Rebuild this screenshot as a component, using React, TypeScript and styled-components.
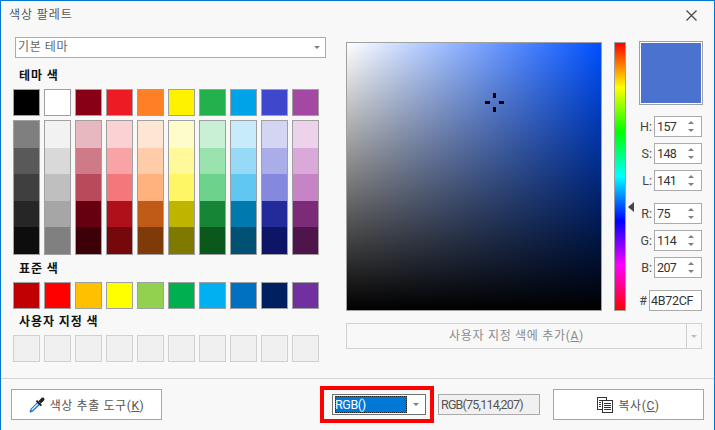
import styled, { createGlobalStyle } from 'styled-components';

const THEME_COLORS = ['#000000', '#ffffff', '#880015', '#ed1c24', '#ff7f27', '#fff200', '#22b14c', '#00a2e8', '#3f48cc', '#a349a4'];

const SHADES = [
    ['#7f7f7f', '#595959', '#3f3f3f', '#262626', '#0d0d0d'],
    ['#f2f2f2', '#d9d9d9', '#bfbfbf', '#a6a6a6', '#808080'],
    ['#e7b8c0', '#cf7a87', '#b84a5b', '#660010', '#3d0008'],
    ['#fbd1d3', '#f8a4a7', '#f4777c', '#b0101a', '#76080c'],
    ['#ffe5d4', '#ffcca9', '#ffb27d', '#bf5b17', '#7f3a0a'],
    ['#fffccc', '#fff999', '#fff666', '#bfb500', '#807900'],
    ['#c9f0d5', '#9be3ae', '#6dd38c', '#178536', '#0a581c'],
    ['#c8ebfb', '#96daf7', '#60c7f2', '#0079ae', '#005174'],
    ['#d3d5f2', '#aaade8', '#8488df', '#232a99', '#0f1566'],
    ['#edd2ec', '#daa9d9', '#c683c6', '#7b2b78', '#50144c'],
];

const STANDARD_COLORS = ['#c00000', '#ff0000', '#ffc000', '#ffff00', '#92d050', '#00b050', '#00b0f0', '#0070c0', '#002060', '#7030a0'];

const HSL_VALUES = [
    { label: 'H:', value: '157' },
    { label: 'S:', value: '148' },
    { label: 'L:', value: '141' },
];

const RGB_VALUES = [
    { label: 'R:', value: '75' },
    { label: 'G:', value: '114' },
    { label: 'B:', value: '207' },
];

const GlobalStyle = createGlobalStyle`
    html, body {
        margin: 0;
        padding: 0;
        background: #f8f8f8;
    }
    * {
        box-sizing: border-box;
    }
`;

const Spinner = ({ label, value }: { label: string; value: string }) => (
    <SpinRow>
        <SpinLabel>{label}</SpinLabel>
        <SpinBox>
            <SpinValue>{value}</SpinValue>
            <SpinArrows>
                <ArrowUp />
                <ArrowDown />
            </SpinArrows>
        </SpinBox>
    </SpinRow>
);

const App = () => {
    return (
        <>
            <GlobalStyle />
            <Dialog>
                <TitleBar>
                    <Title>색상 팔레트</Title>
                    <CloseIcon viewBox="0 0 11 11">
                        <path d="M0.5 0.5L10.5 10.5M10.5 0.5L0.5 10.5" stroke="#4a4a4a" strokeWidth="1.3" fill="none" />
                    </CloseIcon>
                </TitleBar>

                <Body>
                    <LeftPane>
                        <ThemeSelect>
                            <span>기본 테마</span>
                            <SmallCaret />
                        </ThemeSelect>

                        <SectionLabel>테마 색</SectionLabel>
                        <SwatchRow>
                            {THEME_COLORS.map((color) => (
                                <Swatch key={color} color={color} />
                            ))}
                        </SwatchRow>
                        <ShadeGrid>
                            {SHADES.map((column, index) => (
                                <ShadeColumn key={index}>
                                    {column.map((color) => (
                                        <Shade key={color} color={color} />
                                    ))}
                                </ShadeColumn>
                            ))}
                        </ShadeGrid>

                        <StandardLabel>표준 색</StandardLabel>
                        <SwatchRow>
                            {STANDARD_COLORS.map((color) => (
                                <Swatch key={color} color={color} />
                            ))}
                        </SwatchRow>

                        <CustomLabel>사용자 지정 색</CustomLabel>
                        <SwatchRow>
                            {Array.from({ length: 10 }).map((_, index) => (
                                <EmptySwatch key={index} />
                            ))}
                        </SwatchRow>
                    </LeftPane>

                    <RightPane>
                        <PickerRow>
                            <ColorField>
                                <Crosshair viewBox="0 0 19 19">
                                    <path d="M8 0h3v5H8zM8 14h3v5H8zM0 8h5v3H0zM14 8h5v3h-5z" fill="#000" />
                                </Crosshair>
                            </ColorField>
                            <HueColumn>
                                <HueBar />
                                <HueMarker />
                            </HueColumn>
                            <ValueColumn>
                                <Preview>
                                    <PreviewFill />
                                </Preview>
                                <SpinGroup>
                                    {HSL_VALUES.map((item) => (
                                        <Spinner key={item.label} {...item} />
                                    ))}
                                </SpinGroup>
                                <RgbGroup>
                                    {RGB_VALUES.map((item) => (
                                        <Spinner key={item.label} {...item} />
                                    ))}
                                </RgbGroup>
                                <HexRow>
                                    <SpinLabel>#</SpinLabel>
                                    <HexBox>4B72CF</HexBox>
                                </HexRow>
                            </ValueColumn>
                        </PickerRow>

                        <AddButton>
                            <AddLabel>
                                사용자 지정 색에 추가(<u>A</u>)
                            </AddLabel>
                            <AddDrop>
                                <SmallCaret $light />
                            </AddDrop>
                        </AddButton>
                    </RightPane>
                </Body>

                <Footer>
                    <FooterButton>
                        <ButtonIcon viewBox="0 0 16 16">
                            <path d="M1 15.5L0.6 14.2 1.4 12 8.6 4.8 11.2 7.4 4 14.6 1.8 15.4z" fill="#1f78d1" />
                            <path d="M2.6 13.2L8.8 7" stroke="#fff" strokeWidth="1.1" fill="none" />
                            <path d="M7.4 3.6L12.4 8.6" stroke="#222" strokeWidth="2" fill="none" />
                            <path d="M9.4 4.2L12 1.4C13 .4 14.2 .2 15 1s.6 2-.4 3l-2.8 2.6z" fill="#222" />
                        </ButtonIcon>
                        <span>
                            색상 추출 도구(<u>K</u>)
                        </span>
                    </FooterButton>

                    <FormatCluster>
                        <FormatHighlight>
                            <FormatSelect>
                                <FormatValue>RGB()</FormatValue>
                                <FormatDrop>
                                    <SmallCaret />
                                </FormatDrop>
                            </FormatSelect>
                        </FormatHighlight>
                        <FormatOutput>RGB(75,114,207)</FormatOutput>
                    </FormatCluster>

                    <FooterButton>
                        <ButtonIcon viewBox="0 0 16 16" shapeRendering="crispEdges">
                            <path d="M4.5 12.5H0.5V0.5H9.5V3.5" fill="none" stroke="#333" />
                            <path d="M2 3.5h3M2 5.5h2M2 7.5h2M2 9.5h2" stroke="#333" />
                            <path d="M5.5 3.5h10v12h-10z" fill="#fff" stroke="#333" />
                            <path d="M7 6.5h7M7 8.5h7M7 10.5h7M7 12.5h7" stroke="#333" />
                        </ButtonIcon>
                        <span>
                            복사(<u>C</u>)
                        </span>
                    </FooterButton>
                </Footer>
            </Dialog>
        </>
    );
};

export default App;

const Dialog = styled.div`
    width: 715px;
    height: 430px;
    display: flex;
    flex-direction: column;
    background: #f8f8f8;
    border: 1px solid #0078d4;
    border-bottom: none;
    font-family: 'Roboto', 'Noto Sans CJK KR', sans-serif;
    font-size: 12px;
    color: #333;
    overflow: hidden;
`;

const TitleBar = styled.div`
    height: 36px;
    flex: none;
    display: flex;
    justify-content: space-between;
    padding: 6px 17px 0 8px;
`;

const Title = styled.div`
    font-size: 12px;
    line-height: 17px;
    letter-spacing: 0.9px;
    color: #555;
`;

const CloseIcon = styled.svg`
    width: 11px;
    height: 11px;
    margin-top: 3px;
`;

const Body = styled.div`
    height: 342px;
    flex: none;
    display: flex;
    border-bottom: 1px solid #d4d4d4;
`;

const LeftPane = styled.div`
    width: 345px;
    flex: none;
    padding-left: 12px;
`;

const ThemeSelect = styled.div`
    width: 311px;
    height: 21px;
    margin-left: 2px;
    padding: 0 5px 0 2px;
    display: flex;
    align-items: center;
    justify-content: space-between;
    background: #fff;
    border: 1px solid #ababab;
    color: #666;
    letter-spacing: 0.6px;
    line-height: 17px;
`;

const SmallCaret = styled.i<{ $light?: boolean }>`
    display: block;
    width: 0;
    height: 0;
    border-left: 3px solid transparent;
    border-right: 3px solid transparent;
    border-top: 3px solid ${({ $light }) => ($light ? '#bdbdbd' : '#808080')};
`;

const SectionLabel = styled.div`
    height: 31px;
    padding: 10px 0 0 6px;
    font-weight: 700;
    font-size: 12px;
    line-height: 17px;
    letter-spacing: 0.9px;
    color: #111;
`;

const StandardLabel = styled(SectionLabel)`
    height: 27px;
    padding-top: 6px;
`;

const CustomLabel = styled(SectionLabel)`
    height: 26px;
    padding-top: 5px;
`;

const SwatchRow = styled.div`
    display: grid;
    grid-template-columns: repeat(10, 27px);
    column-gap: 4px;
`;

const Swatch = styled.div<{ color: string }>`
    height: 27px;
    background: ${({ color }) => color};
    border: 1px solid #a0a0a0;
`;

const EmptySwatch = styled.div`
    height: 27px;
    background: #f0f0f0;
    border: 1px solid #d0d0d0;
`;

const ShadeGrid = styled(SwatchRow)`
    margin-top: 4px;
`;

const ShadeColumn = styled.div`
    height: 135px;
    display: flex;
    flex-direction: column;
    border: 1px solid #a0a0a0;
`;

const Shade = styled.div<{ color: string }>`
    flex: 1;
    background: ${({ color }) => color};
`;

const RightPane = styled.div`
    flex: 1;
    padding-top: 5px;
`;

const PickerRow = styled.div`
    display: flex;
    align-items: flex-start;
`;

const ColorField = styled.div`
    position: relative;
    width: 256px;
    height: 269px;
    flex: none;
    border: 1px solid #a0a0a0;
    background: linear-gradient(to top, #000, transparent), linear-gradient(to right, #fff, #0050ff);
`;

const Crosshair = styled.svg`
    position: absolute;
    left: 138px;
    top: 50px;
    width: 19px;
    height: 19px;
`;

const HueColumn = styled.div`
    position: relative;
    width: 37px;
    flex: none;
    padding-left: 12px;
`;

const HueBar = styled.div`
    width: 12px;
    height: 269px;
    border: 1px solid #a0a0a0;
    background: linear-gradient(to bottom, #f00, #ff0, #0f0, #0ff, #00f, #f0f, #f00);
`;

const HueMarker = styled.i`
    position: absolute;
    left: 26px;
    top: 160px;
    width: 0;
    height: 0;
    border-top: 5.5px solid transparent;
    border-bottom: 5.5px solid transparent;
    border-right: 6px solid #444;
`;

const ValueColumn = styled.div`
    width: 64px;
    flex: none;
    margin-top: -1px;
`;

const Preview = styled.div`
    width: 64px;
    height: 64px;
    padding: 1px;
    border: 1px solid #a0a0a0;
    background: #fff;
`;

const PreviewFill = styled.div`
    width: 100%;
    height: 100%;
    background: #4b72cf;
`;

const SpinGroup = styled.div`
    display: flex;
    flex-direction: column;
    gap: 6px;
    margin-top: 11px;
`;

const RgbGroup = styled(SpinGroup)`
    margin-top: 12px;
`;

const SpinRow = styled.div`
    display: flex;
    align-items: center;
    justify-content: flex-end;
    gap: 2px;
    height: 21px;
    padding-right: 1px;
`;

const SpinLabel = styled.span`
    font-size: 12.5px;
    color: #444;
`;

const SpinBox = styled.div`
    width: 48px;
    height: 21px;
    display: flex;
    align-items: center;
    justify-content: space-between;
    padding: 0 7px 0 2px;
    background: #fff;
    border: 1px solid #ababab;
`;

const SpinValue = styled.span`
    font-size: 12.5px;
    letter-spacing: -0.6px;
    color: #333;
`;

const SpinArrows = styled.div`
    display: flex;
    flex-direction: column;
    gap: 5px;
`;

const ArrowUp = styled.i`
    display: block;
    width: 0;
    height: 0;
    border-left: 3px solid transparent;
    border-right: 3px solid transparent;
    border-bottom: 3px solid #808080;
`;

const ArrowDown = styled.i`
    display: block;
    width: 0;
    height: 0;
    border-left: 3px solid transparent;
    border-right: 3px solid transparent;
    border-top: 3px solid #808080;
`;

const HexRow = styled(SpinRow)`
    margin-top: 12px;
`;

const HexBox = styled.div`
    width: 53px;
    height: 21px;
    display: flex;
    align-items: center;
    padding-left: 1px;
    background: #fff;
    border: 1px solid #ababab;
    font-size: 12.5px;
    letter-spacing: -0.3px;
    color: #333;
`;

const AddButton = styled.div`
    width: 356px;
    height: 26px;
    margin-top: 12px;
    display: flex;
    border: 1px solid #d0d0d0;
`;

const AddLabel = styled.div`
    flex: 1;
    text-align: center;
    line-height: 24px;
    letter-spacing: 0.7px;
    color: #8a8a8a;
`;

const AddDrop = styled.div`
    width: 15px;
    display: flex;
    align-items: center;
    justify-content: center;
    border-left: 1px solid #d0d0d0;
`;

const Footer = styled.div`
    height: 44px;
    flex: none;
    display: flex;
    align-items: center;
    gap: 13px;
    padding: 7px 10px 0;
`;

const FooterButton = styled.div`
    width: 151px;
    height: 31px;
    display: flex;
    align-items: center;
    justify-content: center;
    gap: 5px;
    background: #fff;
    border: 1px solid #a6a6a6;
    letter-spacing: 0.6px;
    color: #555;
`;

const ButtonIcon = styled.svg`
    width: 16px;
    height: 16px;
    flex: none;
`;

const FormatCluster = styled.div`
    margin-left: auto;
    display: flex;
    align-items: center;
    gap: 4px;
`;

const FormatHighlight = styled.div`
    width: 114px;
    height: 37px;
    display: flex;
    align-items: center;
    justify-content: flex-end;
    padding-right: 4px;
    border: 4px solid #ff0000;
`;

const FormatSelect = styled.div`
    width: 94px;
    height: 21px;
    display: flex;
    align-items: center;
    padding: 1px;
    background: #fff;
    border: 1px solid #707070;
`;

const FormatValue = styled.div`
    width: 72px;
    height: 17px;
    margin-left: 1px;
    background: #0078d7;
    outline: 1px dotted #222;
    outline-offset: -1px;
    font-size: 12.5px;
    letter-spacing: -0.4px;
    color: #fff;
    line-height: 17px;
`;

const FormatDrop = styled.div`
    flex: 1;
    display: flex;
    justify-content: center;
`;

const FormatOutput = styled.div`
    width: 102px;
    height: 21px;
    padding-left: 2px;
    background: #f0f0f0;
    border: 1px solid #ababab;
    font-size: 12.5px;
    letter-spacing: -0.8px;
    line-height: 19px;
    color: #555;
`;
